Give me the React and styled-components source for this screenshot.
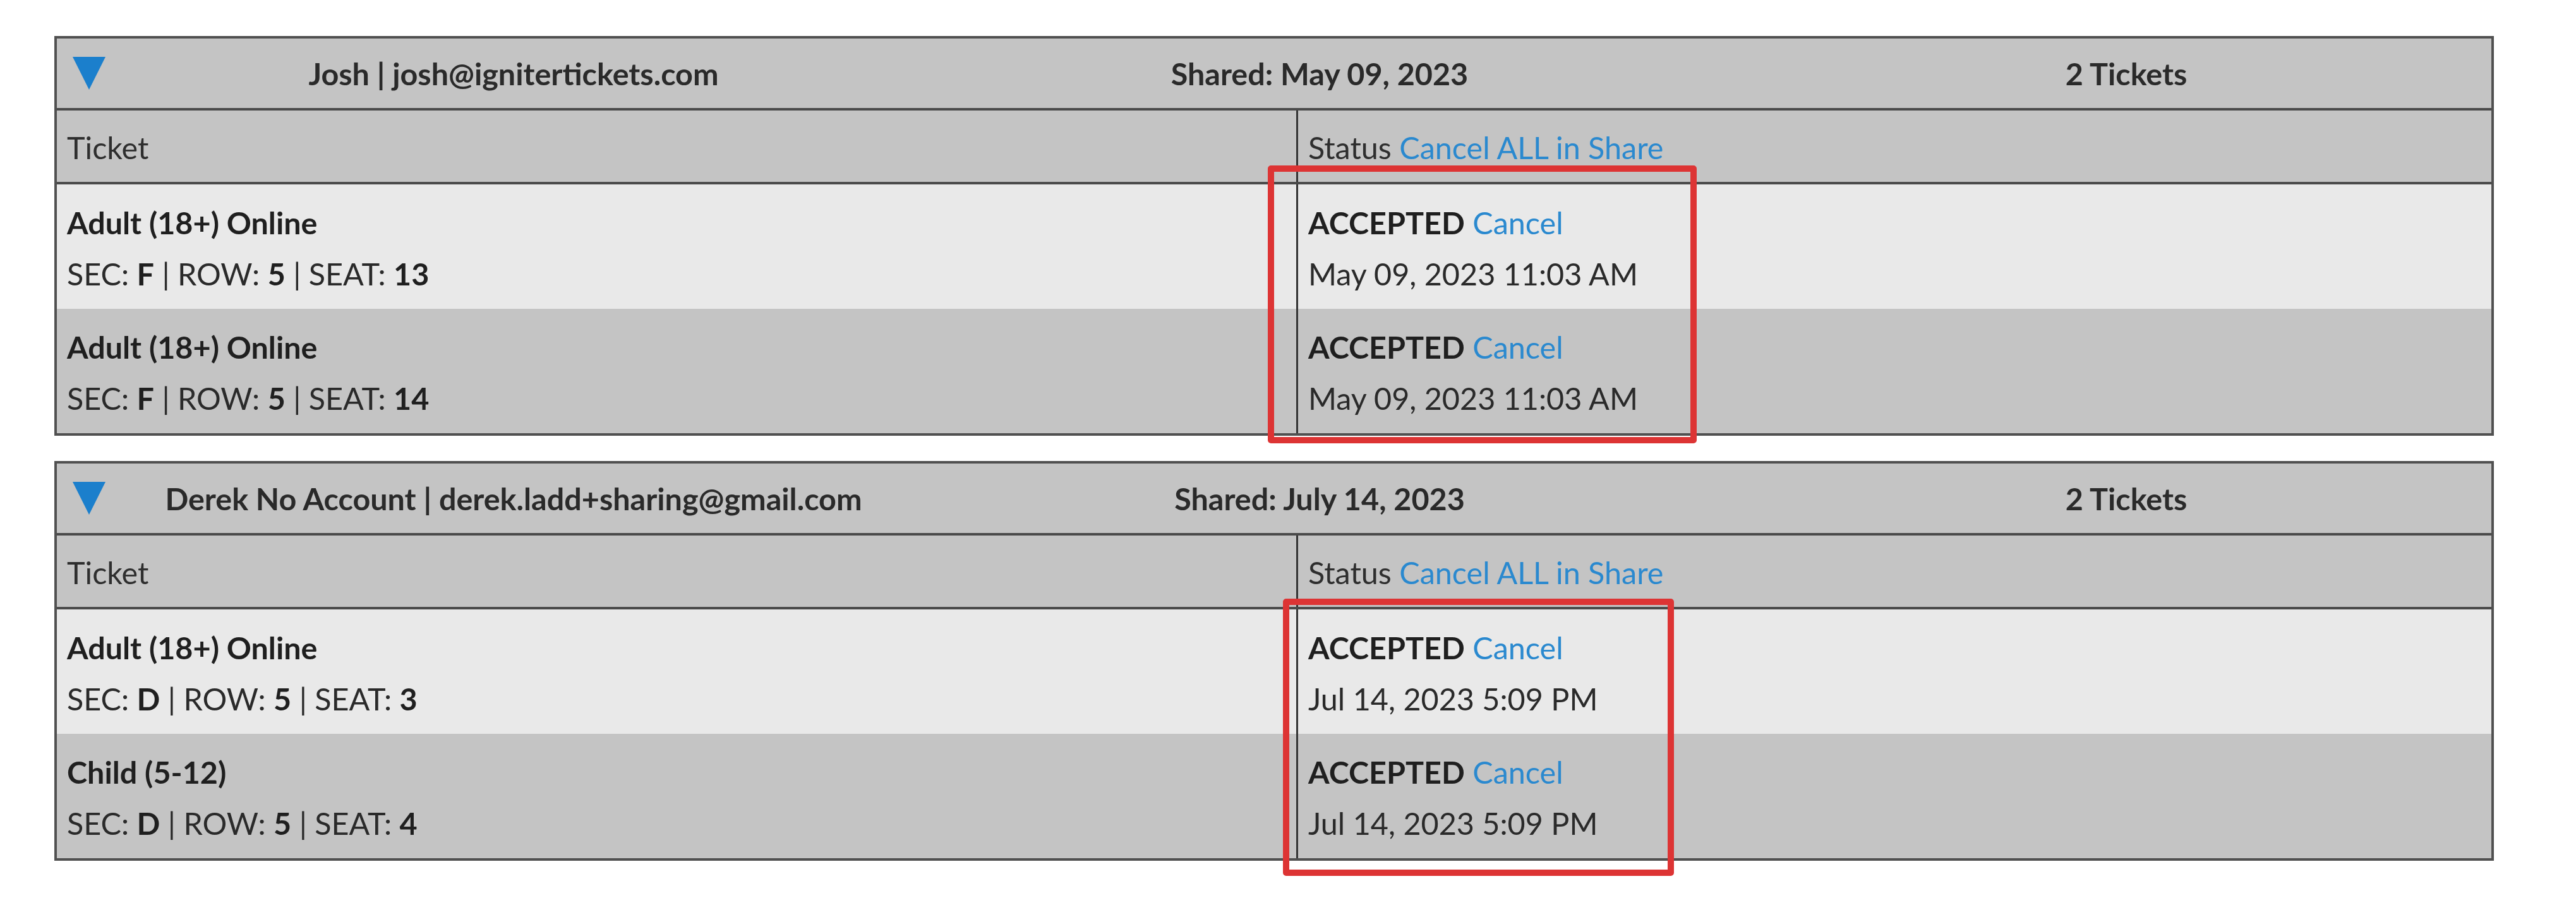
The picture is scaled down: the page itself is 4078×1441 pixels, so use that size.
import React from "react";
import styled, { createGlobalStyle } from "styled-components";

const GlobalStyle = createGlobalStyle`
  html, body { margin: 0; padding: 0; background: #ffffff; }
  body {
    min-height: 1441px;
    font-family: Lato, "Open Sans", "Liberation Sans", sans-serif;
    color: #262626;
  }
`;

const Page = styled.div`
  display: flex;
  flex-direction: column;
  gap: 40px;
  padding: 57px 0 80px 86px;
  width: 3862px;
`;

const Card = styled.section`
  position: relative;
  border: 4px solid #505050;
  background: #c4c4c4;
`;

const ShareHeader = styled.div`
  display: grid;
  grid-template-columns: 102px 1242px 1310px 1fr;
  align-items: center;
  height: 110px;
  border-bottom: 4px solid #4a4a4a;
  font-size: 48.5px;
  font-weight: 700;
  color: #2a2a2a;
`;

const Toggle = styled.div`
  display: flex;
  justify-content: center;
  align-items: center;
`;

const HeadCell = styled.div`
  text-align: center;
  white-space: nowrap;
  padding-left: ${(p) => p.$shift || 0}px;
`;

const Grid = styled.div`
  display: grid;
  grid-template-columns: 1962px 1fr;
  background: ${(p) => p.$bg};
  border-bottom: ${(p) => (p.$divider ? "4px solid #4a4a4a" : "none")};
`;

const ColHead = styled.div`
  height: 113px;
  display: flex;
  align-items: center;
  padding: 2px 0 0 16px;
  box-sizing: border-box;
  font-size: 48.5px;
  color: #2e2e2e;
  white-space: pre;
  border-left: ${(p) => (p.$split ? "3px solid #333" : "none")};
`;

const Cell = styled.div`
  padding: 20px 16px 15px;
  font-size: 48.5px;
  line-height: 81px;
  color: #2a2a2a;
  border-left: ${(p) => (p.$split ? "3px solid #333" : "none")};
`;

const Line = styled.div`
  white-space: nowrap;
`;

const Strong = styled.b`
  font-weight: 700;
  color: #1f1f1f;
`;

const Link = styled.a`
  color: #2a89cf;
  text-decoration: none;
  cursor: pointer;
`;

const Highlight = styled.div`
  position: absolute;
  top: ${(p) => p.$top}px;
  left: ${(p) => p.$left}px;
  width: ${(p) => p.$w}px;
  height: ${(p) => p.$h}px;
  box-sizing: border-box;
  border: 10px solid #dd3434;
  border-radius: 5px;
  pointer-events: none;
`;

const Triangle = () => (
  <svg width="52" height="52" viewBox="0 0 52 52">
    <polygon points="0,0 52,0 26,52" fill="#1b7fcc" />
  </svg>
);

const shares = [
  {
    who: "Josh | josh@ignitertickets.com",
    shared: "Shared: May 09, 2023",
    count: "2 Tickets",
    box: { top: 201, left: 1917, w: 679, h: 440 },
    tickets: [
      { name: "Adult (18+) Online", sec: "F", row: "5", seat: "13", when: "May 09, 2023 11:03 AM" },
      { name: "Adult (18+) Online", sec: "F", row: "5", seat: "14", when: "May 09, 2023 11:03 AM" },
    ],
  },
  {
    who: "Derek No Account | derek.ladd+sharing@gmail.com",
    shared: "Shared: July 14, 2023",
    count: "2 Tickets",
    box: { top: 214, left: 1941, w: 619, h: 439 },
    tickets: [
      { name: "Adult (18+) Online", sec: "D", row: "5", seat: "3", when: "Jul 14, 2023 5:09 PM" },
      { name: "Child (5-12)", sec: "D", row: "5", seat: "4", when: "Jul 14, 2023 5:09 PM" },
    ],
  },
];

export default function App() {
  return (
    <>
      <GlobalStyle />
      <Page>
        {shares.map((s, i) => (
          <Card key={i}>
            <ShareHeader>
              <Toggle>
                <Triangle />
              </Toggle>
              <HeadCell>{s.who}</HeadCell>
              <HeadCell>{s.shared}</HeadCell>
              <HeadCell $shift={44}>{s.count}</HeadCell>
            </ShareHeader>
            <Grid $bg="#c4c4c4" $divider>
              <ColHead>Ticket</ColHead>
              <ColHead $split>
                {"Status "}
                <Link>Cancel ALL in Share</Link>
              </ColHead>
            </Grid>
            {s.tickets.map((t, j) => (
              <Grid key={j} $bg={j % 2 === 0 ? "#e9e9e9" : "#c4c4c4"}>
                <Cell>
                  <Line>
                    <Strong>{t.name}</Strong>
                  </Line>
                  <Line>
                    SEC: <Strong>{t.sec}</Strong> | ROW: <Strong>{t.row}</Strong> | SEAT: <Strong>{t.seat}</Strong>
                  </Line>
                </Cell>
                <Cell $split>
                  <Line>
                    <Strong>ACCEPTED</Strong> <Link>Cancel</Link>
                  </Line>
                  <Line>{t.when}</Line>
                </Cell>
              </Grid>
            ))}
            <Highlight $top={s.box.top} $left={s.box.left} $w={s.box.w} $h={s.box.h} />
          </Card>
        ))}
      </Page>
    </>
  );
}
